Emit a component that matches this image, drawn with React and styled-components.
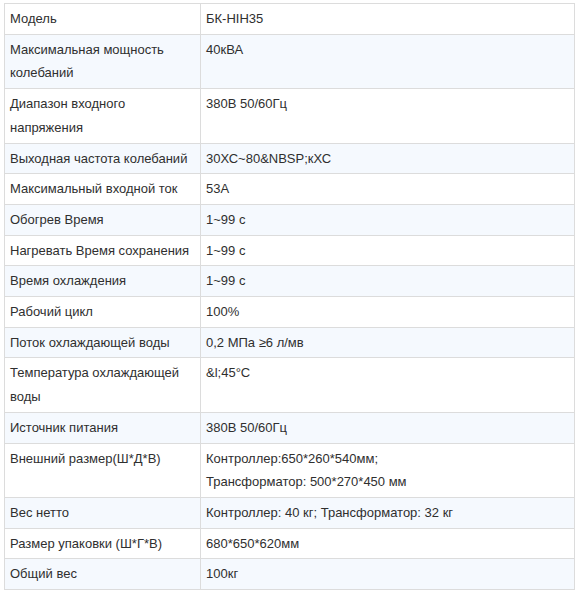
import styled, { createGlobalStyle } from "styled-components";

const GlobalStyle = createGlobalStyle`
  body {
    margin: 0;
    background: #ffffff;
    font-family: "Liberation Sans", Arial, sans-serif;
  }
`;

const rows = [
  ["Модель", ["БК-HIH35"]],
  ["Максимальная мощность колебаний", ["40кВА"]],
  ["Диапазон входного напряжения", ["380В 50/60Гц"]],
  ["Выходная частота колебаний", ["30ХС~80&NBSP;кХС"]],
  ["Максимальный входной ток", ["53A"]],
  ["Обогрев Время", ["1~99 с"]],
  ["Нагревать Время сохранения", ["1~99 с"]],
  ["Время охлаждения", ["1~99 с"]],
  ["Рабочий цикл", ["100%"]],
  ["Поток охлаждающей воды", ["0,2 МПа ≥6 л/мв"]],
  ["Температура охлаждающей воды", ["&l;45°C"]],
  ["Источник питания", ["380В 50/60Гц"]],
  ["Внешний размер(Ш*Д*В)", ["Контроллер:650*260*540мм;", "Трансформатор: 500*270*450 мм"]],
  ["Вес нетто", ["Контроллер: 40 кг; Трансформатор: 32 кг"]],
  ["Размер упаковки (Ш*Г*В)", ["680*650*620мм"]],
  ["Общий вес", ["100кг"]],
];

export default function App() {
  return (
    <>
      <GlobalStyle />
      <Wrap>
        <SpecTable>
          <tbody>
            {rows.map(([name, values], i) => (
              <Row key={name} striped={i % 2 === 1}>
                <NameCell>{name}</NameCell>
                <ValueCell>
                  {values.map((v) => (
                    <Line key={v}>{v}</Line>
                  ))}
                </ValueCell>
              </Row>
            ))}
          </tbody>
        </SpecTable>
      </Wrap>
    </>
  );
}

const Wrap = styled.div`
  padding: 3px 11px 0 4px;
`;

const SpecTable = styled.table`
  width: 571px;
  border-collapse: collapse;
  table-layout: fixed;
  font-size: 13px;
  color: #2f2f2f;
`;

const Row = styled.tr`
  background: ${({ striped }) => (striped ? "#f5f9fe" : "#ffffff")};
`;

const NameCell = styled.td`
  width: 185px;
  border: 1px solid #dcdcdc;
  padding: 3px 5px 3px 5px;
  line-height: 23.7px;
  vertical-align: top;
`;

const ValueCell = styled.td`
  border: 1px solid #dcdcdc;
  padding: 3px 5px 3px 5px;
  line-height: 23.7px;
  vertical-align: top;
`;

const Line = styled.div``;
